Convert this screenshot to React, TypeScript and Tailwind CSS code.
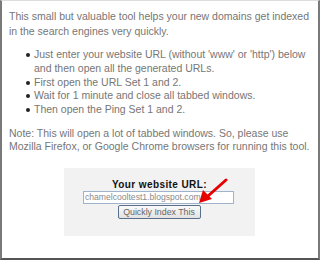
const BULLETS: string[][] = [
  ["Just enter your website URL (without 'www' or 'http') below", 'and then open all the generated URLs.'],
  ['First open the URL Set 1 and 2.'],
  ['Wait for 1 minute and close all tabbed windows.'],
  ['Then open the Ping Set 1 and 2.'],
];

export default function App() {
  return (
    <div className="w-[320px] h-[260px] bg-white overflow-hidden">
      <div
        className="h-[260px] border-l-2 border-r-2 border-b-2 border-t border-l-[#7a7a7a] border-r-[#7a7a7a] border-b-[#555] border-t-[#ddd] pl-[7px] pt-[8px] text-[10.5px] leading-[15px] text-[#767676] whitespace-nowrap"
        style={{ fontFamily: '"Liberation Sans", Arial, sans-serif' }}
      >
        <p>
          This small but valuable tool helps your new domains get indexed
          <br />
          in the search engines very quickly.
        </p>

        <ul className="mt-[9px] pl-[25px] list-none leading-[13.8px]">
          {BULLETS.map((lines) => (
            <li key={lines[0]} className="relative">
              <span className="absolute left-[-8px] top-[5px] w-[4px] h-[4px] rounded-full bg-[#222]" />
              {lines.map((l, i) => (
                <div key={i}>{l}</div>
              ))}
            </li>
          ))}
        </ul>

        <p className="mt-[10px] leading-[13.5px]">
          Note: This will open a lot of tabbed windows. So, please use
          <br />
          Mozilla Firefox, or Google Chrome browsers for running this tool.
        </p>

        <div className="relative mt-[14px] ml-[55px] w-[191px] h-[68px] bg-[#f2f2f2] flex flex-col items-center pt-[10px]">
          <div className="text-[10px] leading-[13px] font-bold tracking-[0.4px] text-[#111]">Your website URL:</div>
          <input
            readOnly
            value="chamelcooltest1.blogspot.com"
            className="ml-[-2px] w-[151px] h-[13px] px-[1px] border border-[#9fb4cc] bg-white text-[8.6px] leading-[11px] text-[#8a8a8a] outline-none"
            style={{ fontFamily: '"Liberation Sans", Arial, sans-serif' }}
          />
          <button className="mt-[1px] ml-[-1px] w-[83px] h-[14px] border border-[#5a6f8a] rounded-[2px] bg-gradient-to-b from-[#fafafa] to-[#e2e2e2] text-[8.8px] leading-[12px] text-[#666]">
            Quickly Index This
          </button>
          <svg className="absolute left-[133px] top-[10px]" width="32" height="28" viewBox="0 0 32 28">
            <line x1="29" y1="2" x2="11" y2="18" stroke="#e60000" strokeWidth="3" strokeLinecap="round" />
            <polygon points="2,25 6,12 15,21" fill="#e60000" />
          </svg>
        </div>
      </div>
    </div>
  );
}
